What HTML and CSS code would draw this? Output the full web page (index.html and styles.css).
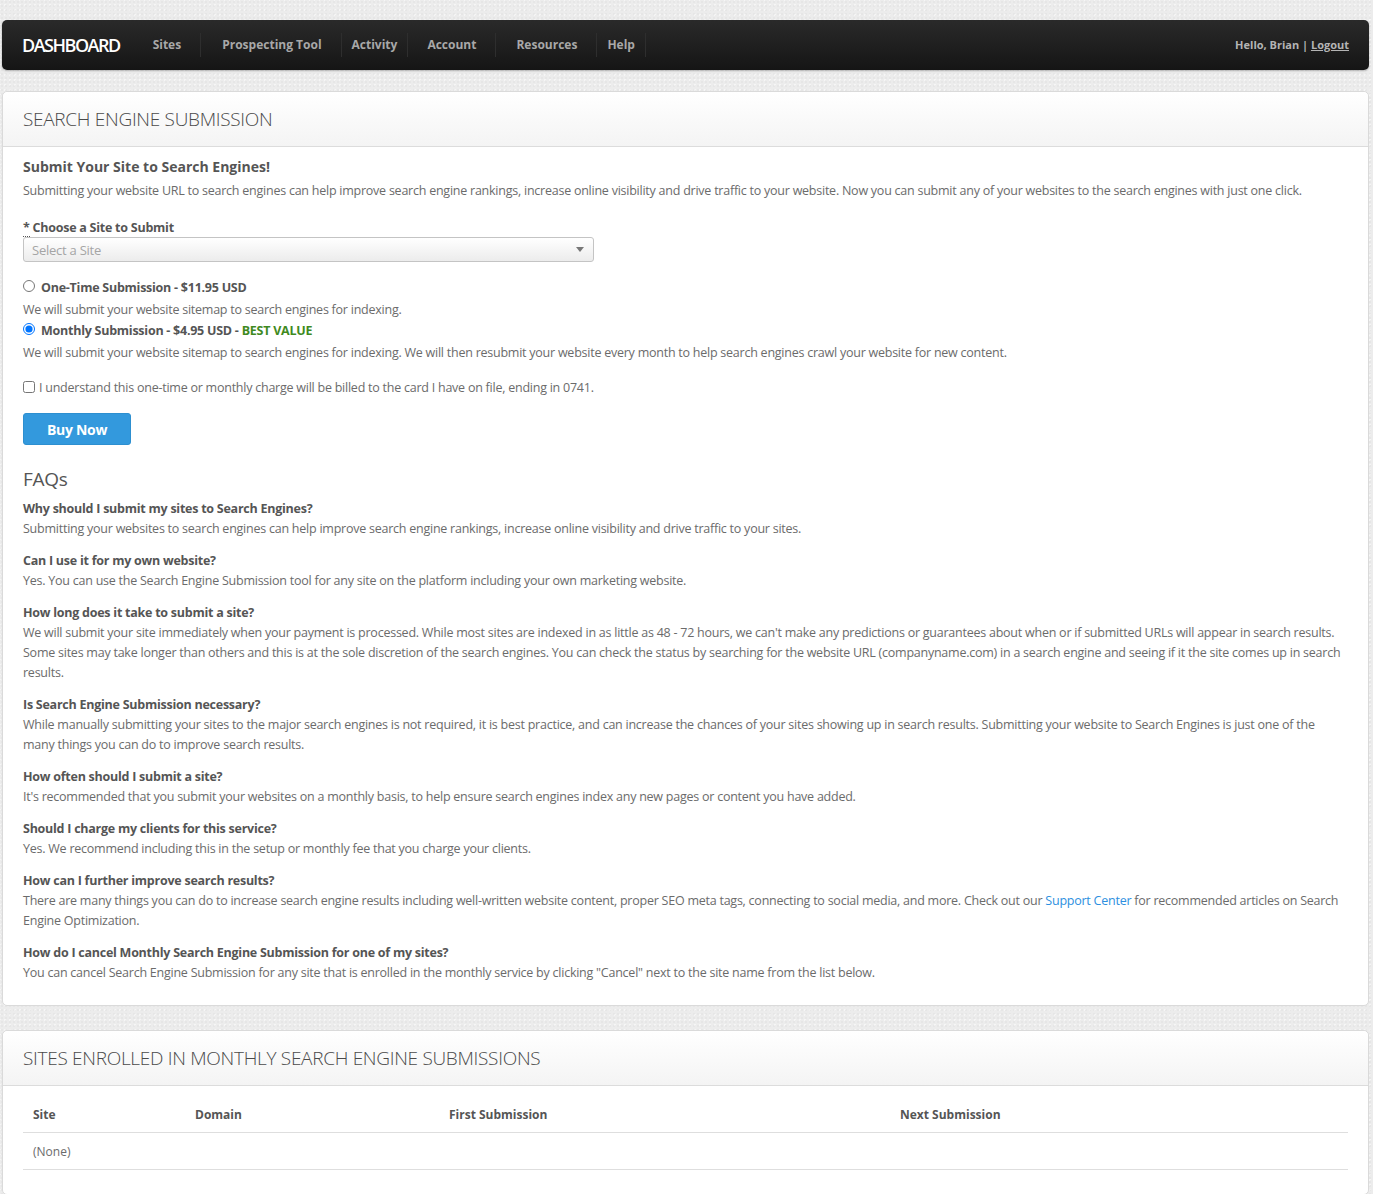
FILE: index.html
```html
<!DOCTYPE html>
<html lang="en">
<head>
<meta charset="utf-8">
<title>Search Engine Submission</title>
<link rel="stylesheet" href="styles.css">
</head>
<body>
<div class="page">
  <nav class="navbar">
    <a class="brand" href="#">DASHBOARD</a>
    <ul class="nav">
      <li class="nav-item p-wide"><a href="#">Sites</a></li>
      <li class="nav-item p-wide"><a href="#">Prospecting Tool</a></li>
      <li class="nav-item p-narrow-l"><a href="#">Activity</a></li>
      <li class="nav-item p-wide"><a href="#">Account</a></li>
      <li class="nav-item p-wide"><a href="#">Resources</a></li>
      <li class="nav-item p-narrow"><a href="#">Help</a></li>
    </ul>
    <div class="user">Hello, Brian | <a href="#">Logout</a></div>
  </nav>

  <section class="card">
    <header class="card-head"><h2>Search Engine Submission</h2></header>
    <div class="card-body">
      <h3 class="lead">Submit Your Site to Search Engines!</h3>
      <p class="intro">Submitting your website URL to search engines can help improve search engine rankings, increase online visibility and drive traffic to your website. Now you can submit any of your websites to the search engines with just one click.</p>

      <label class="field-label"><abbr title="required">*</abbr> Choose a Site to Submit</label>
      <div class="select">
        <span>Select a Site</span>
        <span class="caret"></span>
      </div>

      <div class="options">
        <label class="option"><input type="radio" name="plan"><span>One-Time Submission - $11.95 USD</span></label>
        <p class="option-desc">We will submit your website sitemap to search engines for indexing.</p>
        <label class="option"><input type="radio" name="plan" checked><span>Monthly Submission - $4.95 USD - <span class="best">BEST VALUE</span></span></label>
        <p class="option-desc">We will submit your website sitemap to search engines for indexing. We will then resubmit your website every month to help search engines crawl your website for new content.</p>
      </div>

      <label class="agree"><input type="checkbox"><span>I understand this one-time or monthly charge will be billed to the card I have on file, ending in 0741.</span></label>

      <button class="btn" type="button">Buy Now</button>

      <h3 class="faq-title">FAQs</h3>
      <dl class="faq">
        <dt>Why should I submit my sites to Search Engines?</dt>
        <dd>Submitting your websites to search engines can help improve search engine rankings, increase online visibility and drive traffic to your sites.</dd>
        <dt>Can I use it for my own website?</dt>
        <dd>Yes. You can use the Search Engine Submission tool for any site on the platform including your own marketing website.</dd>
        <dt>How long does it take to submit a site?</dt>
        <dd>We will submit your site immediately when your payment is processed. While most sites are indexed in as little as 48 - 72 hours, we can't make any predictions or guarantees about when or if submitted URLs will appear in search results. Some sites may take longer than others and this is at the sole discretion of the search engines. You can check the status by searching for the website URL (companyname.com) in a search engine and seeing if it the site comes up in search results.</dd>
        <dt>Is Search Engine Submission necessary?</dt>
        <dd>While manually submitting your sites to the major search engines is not required, it is best practice, and can increase the chances of your sites showing up in search results. Submitting your website to Search Engines is just one of the many things you can do to improve search results.</dd>
        <dt>How often should I submit a site?</dt>
        <dd>It's recommended that you submit your websites on a monthly basis, to help ensure search engines index any new pages or content you have added.</dd>
        <dt>Should I charge my clients for this service?</dt>
        <dd>Yes. We recommend including this in the setup or monthly fee that you charge your clients.</dd>
        <dt>How can I further improve search results?</dt>
        <dd>There are many things you can do to increase search engine results including well-written website content, proper SEO meta tags, connecting to social media, and more. Check out our <a href="#">Support Center</a> for recommended articles on Search Engine Optimization.</dd>
        <dt>How do I cancel Monthly Search Engine Submission for one of my sites?</dt>
        <dd>You can cancel Search Engine Submission for any site that is enrolled in the monthly service by clicking "Cancel" next to the site name from the list below.</dd>
      </dl>
    </div>
  </section>

  <section class="card card-second">
    <header class="card-head"><h2>Sites Enrolled in Monthly Search Engine Submissions</h2></header>
    <div class="card-body table-body">
      <table class="sites">
        <thead>
          <tr>
            <th class="c-site">Site</th>
            <th class="c-domain">Domain</th>
            <th class="c-first">First Submission</th>
            <th class="c-next">Next Submission</th>
          </tr>
        </thead>
        <tbody>
          <tr><td>(None)</td><td></td><td></td><td></td></tr>
        </tbody>
      </table>
    </div>
  </section>
</div>
</body>
</html>
```

FILE: styles.css
```css
* { box-sizing: border-box; }

html, body {
  margin: 0;
  padding: 0;
}

body {
  background-color: #ececec;
  background-image:
    radial-gradient(rgba(0,0,0,0.025) 1px, transparent 1px),
    radial-gradient(rgba(255,255,255,0.5) 1px, transparent 1px);
  background-size: 4px 4px, 5px 5px;
  background-position: 0 0, 2px 2px;
  font-family: "Open Sans", "Liberation Sans", sans-serif;
  font-size: 12.5px;
  line-height: 20px;
  color: #6b6b6b;
  letter-spacing: -0.24px;
}

.page {
  padding: 20px 4px 40px 2px;
}

/* Navbar */
.navbar {
  display: flex;
  align-items: center;
  height: 50px;
  background: linear-gradient(#2a2a2a, #151515);
  border-radius: 5px;
  padding: 0 20px 0 20px;
  box-shadow: 0 1px 2px rgba(0,0,0,0.25);
  letter-spacing: 0;
}

.brand {
  color: #fff;
  font-size: 18px;
  font-weight: 600;
  letter-spacing: -1.5px;
  text-decoration: none;
  margin-right: 19px;
}

.nav {
  display: flex;
  list-style: none;
  margin: 0;
  padding: 0;
  height: 50px;
}

.nav-item {
  display: flex;
  align-items: center;
  padding: 0 19px 0 20px;
  border-right: 1px solid #2e2e2e;
  margin: 13px 0;
  height: 24px;
}

.nav-item.p-narrow-l { padding: 0 10px 0 10px; }
.nav-item.p-narrow { padding: 0 10px 0 10px; }
.nav-item:first-child { padding-left: 14px; }
.nav-item:nth-child(2) { padding-left: 21px; }
.nav-item:nth-child(4) { padding-left: 19px; }

.nav-item a {
  color: #a8a8a8;
  font-size: 12px;
  font-weight: 700;
  text-decoration: none;
}

.user {
  margin-left: auto;
  color: #b4b4b4;
  font-size: 11px;
  font-weight: 700;
}

.user a {
  color: #b4b4b4;
  text-decoration: underline;
}

/* Cards */
.card {
  margin-top: 21px;
  background: #fff;
  border: 1px solid #dadada;
  border-radius: 5px;
}

.card-second { margin-top: 24px; }

.card-head {
  height: 55px;
  display: flex;
  align-items: center;
  padding: 0 20px;
  background: linear-gradient(#ffffff, #f4f4f4);
  border-bottom: 1px solid #dcdcdc;
  border-radius: 5px 5px 0 0;
}

.card-head h2 {
  margin: 0;
  font-size: 19px;
  font-weight: 300;
  text-transform: uppercase;
  color: #4a4a4a;
  letter-spacing: -0.3px;
}

.card-body {
  padding: 9px 20px 22px 20px;
}

.lead {
  margin: 0;
  font-size: 14px;
  line-height: 22px;
  font-weight: 700;
  color: #555;
  letter-spacing: 0;
}

.intro {
  margin: 3px 0 0 0;
}

.field-label {
  display: block;
  margin-top: 18px;
  font-weight: 700;
  color: #555;
  line-height: 18px;
  letter-spacing: -0.25px;
}

.field-label abbr {
  text-decoration: none;
  border-bottom: 1px dotted #555;
}

.select {
  width: 571px;
  height: 25px;
  margin-top: 0;
  border: 1px solid #c4c4c4;
  border-radius: 3px;
  background: linear-gradient(#ffffff, #ececec);
  display: flex;
  align-items: center;
  justify-content: space-between;
  padding: 0 9px 0 8px;
  color: #a5a5a5;
  font-size: 13px;
}

.caret {
  width: 0;
  height: 0;
  border-left: 4px solid transparent;
  border-right: 4px solid transparent;
  border-top: 5px solid #777;
}

.options {
  margin-top: 15px;
}

.option {
  display: flex;
  align-items: center;
  gap: 6px;
  font-weight: 700;
  color: #555;
  line-height: 22px;
  letter-spacing: -0.25px;
}

.option input {
  margin: 0 0 4px 0;
  width: 12px;
  height: 12px;
}

.best { color: #3f8a1e; }

.option-desc {
  margin: 1px 0 0 0;
}

.agree {
  display: flex;
  align-items: center;
  gap: 4px;
  margin-top: 15px;
}

.agree input {
  margin: 0 0 3px 0;
  width: 12px;
  height: 12px;
}

.btn {
  margin-top: 15px;
  width: 108px;
  height: 32px;
  background: #3399dd;
  border: 1px solid #2d8fd0;
  border-radius: 3px;
  color: #fff;
  font-family: "Open Sans", "Liberation Sans", sans-serif;
  font-size: 14px;
  font-weight: 700;
  letter-spacing: -0.3px;
}

.faq-title {
  margin: 20px 0 0 0;
  font-size: 19px;
  font-weight: 400;
  line-height: 28px;
  color: #555;
  letter-spacing: -0.3px;
}

.faq {
  margin: 6px 0 0 0;
}

.faq dt {
  font-weight: 700;
  color: #555;
  margin-top: 12px;
  letter-spacing: -0.25px;
}

.faq dt:first-child { margin-top: 0; }

.faq dd {
  margin: 0;
}

.faq a {
  color: #2d8fe0;
  text-decoration: none;
}

/* Table */
.table-body {
  padding: 11px 20px 24px 20px;
}

.sites {
  width: 100%;
  border-collapse: collapse;
}

.sites th {
  text-align: left;
  font-size: 12px;
  font-weight: 700;
  color: #555;
  padding: 8px 10px 7px 10px;
  border-bottom: 1px solid #dedede;
  letter-spacing: 0;
}

.sites td {
  padding: 9px 10px 7px 10px;
  border-bottom: 1px solid #dedede;
  font-size: 12px;
  letter-spacing: 0;
}

.c-site { width: 162px; }
.c-domain { width: 254px; }
.c-first { width: 451px; }
```
